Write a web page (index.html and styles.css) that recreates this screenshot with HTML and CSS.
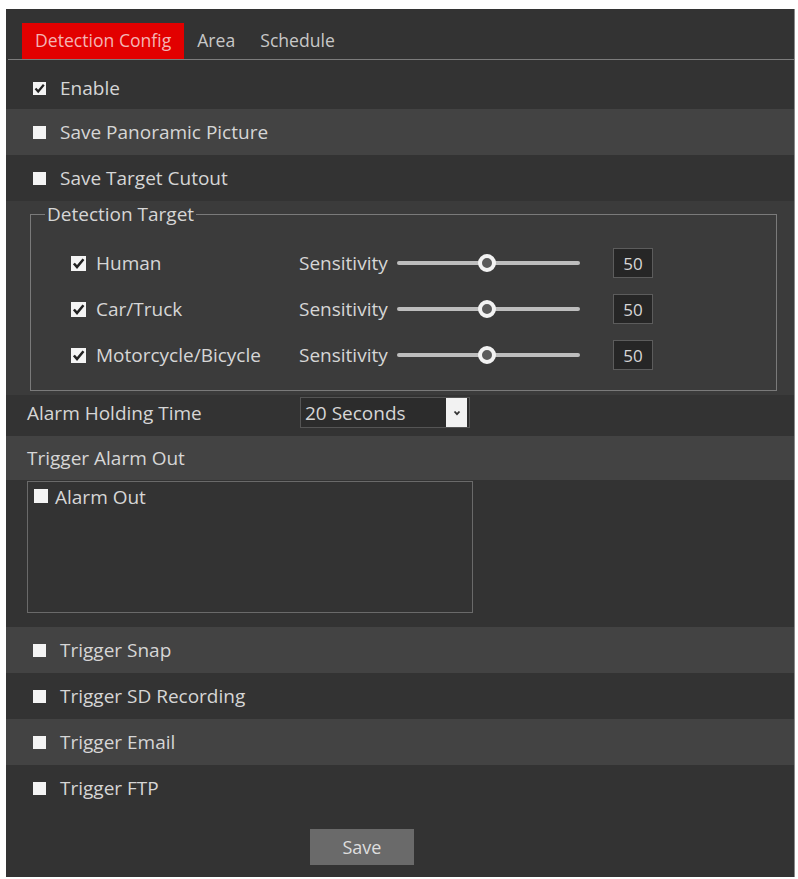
FILE: index.html
```html
<!DOCTYPE html>
<html lang="en">
<head>
    <meta charset="UTF-8">
    <meta name="viewport" content="width=device-width, initial-scale=1.0">
    <title>Detection Config</title>
    <link rel="stylesheet" href="styles.css">
</head>
<body>
    <div class="panel">
        <nav class="tabs">
            <span class="tab active">Detection Config</span>
            <span class="tab">Area</span>
            <span class="tab">Schedule</span>
        </nav>

        <div class="row first">
            <span class="cb checked"><svg viewBox="0 0 13 13"><path d="M2.5 6.5 L5.2 9.5 L10.8 2.8" fill="none" stroke="#222" stroke-width="2.2"/></svg></span>
            <span>Enable</span>
        </div>
        <div class="row light">
            <span class="cb"></span>
            <span>Save Panoramic Picture</span>
        </div>
        <div class="row">
            <span class="cb"></span>
            <span>Save Target Cutout</span>
        </div>

        <div class="target-section">
            <fieldset class="target">
                <legend>Detection Target</legend>
                <div class="target-row">
                    <span class="target-name"><span class="cb checked"><svg viewBox="0 0 13 13"><path d="M2.5 6.5 L5.2 9.5 L10.8 2.8" fill="none" stroke="#222" stroke-width="2.2"/></svg></span>Human</span>
                    <span class="sens-label">Sensitivity</span>
                    <div class="slider"><span class="thumb" style="left: 49%"></span></div>
                    <span class="value">50</span>
                </div>
                <div class="target-row">
                    <span class="target-name"><span class="cb checked"><svg viewBox="0 0 13 13"><path d="M2.5 6.5 L5.2 9.5 L10.8 2.8" fill="none" stroke="#222" stroke-width="2.2"/></svg></span>Car/Truck</span>
                    <span class="sens-label">Sensitivity</span>
                    <div class="slider"><span class="thumb" style="left: 49%"></span></div>
                    <span class="value">50</span>
                </div>
                <div class="target-row">
                    <span class="target-name"><span class="cb checked"><svg viewBox="0 0 13 13"><path d="M2.5 6.5 L5.2 9.5 L10.8 2.8" fill="none" stroke="#222" stroke-width="2.2"/></svg></span>Motorcycle/Bicycle</span>
                    <span class="sens-label">Sensitivity</span>
                    <div class="slider"><span class="thumb" style="left: 49%"></span></div>
                    <span class="value">50</span>
                </div>
            </fieldset>
        </div>

        <div class="row plain holding">
            <span class="holding-label">Alarm Holding Time</span>
            <div class="select">
                <span class="select-text">20 Seconds</span>
                <span class="select-btn"><svg viewBox="0 0 10 10"><path d="M2.5 3.5 L5 6.2 L7.5 3.5" fill="none" stroke="#333" stroke-width="1.8"/></svg></span>
            </div>
        </div>
        <div class="row plain light alarm-head">Trigger Alarm Out</div>
        <div class="alarm-section">
            <div class="alarm-box">
                <span class="cb small"></span>
                <span>Alarm Out</span>
            </div>
        </div>

        <div class="row light">
            <span class="cb"></span>
            <span>Trigger Snap</span>
        </div>
        <div class="row">
            <span class="cb"></span>
            <span>Trigger SD Recording</span>
        </div>
        <div class="row light">
            <span class="cb"></span>
            <span>Trigger Email</span>
        </div>
        <div class="row">
            <span class="cb"></span>
            <span>Trigger FTP</span>
        </div>

        <div class="actions">
            <button class="save">Save</button>
        </div>
    </div>
</body>
</html>
```

FILE: styles.css
```css
body {
    margin: 9px 3px 2px 6px;
    background-color: #ffffff;
    font-family: 'Open Sans', 'Liberation Sans', sans-serif;
    font-size: 19px;
    color: #d6d6d6;
}

.panel {
    width: 789px;
    height: 868px;
    background-color: #333333;
    border-right: 1px solid #8a8a8a;
    box-sizing: border-box;
    display: flex;
    flex-direction: column;
}

.tabs {
    display: flex;
    align-items: stretch;
    gap: 13px;
    height: 36px;
    margin: 14px 0 0 2px;
    padding-left: 14px;
    border-bottom: 1px solid #7c7c7c;
}

.tab {
    display: flex;
    align-items: center;
    font-size: 17.6px;
    color: #c8c8c8;
    padding: 0 0 2px 0;
}

.tab.active {
    background-color: #e20000;
    color: #f4b4b4;
    padding: 0 13px 2px 13px;
}

.tab + .tab + .tab {
    margin-left: 12px;
}

.row {
    display: flex;
    align-items: center;
    gap: 14px;
    height: 46px;
    padding-left: 27px;
    box-sizing: border-box;
}

.row.first {
    height: 49px;
    padding-top: 7px;
}

.row.light {
    background-color: #434343;
}

.row.plain {
    padding-left: 21px;
}

.cb {
    width: 13px;
    height: 13px;
    background-color: #f4f4f4;
    display: inline-block;
    flex-shrink: 0;
}

.cb svg {
    display: block;
    width: 100%;
    height: 100%;
}

.target-section {
    background-color: #3b3b3b;
    padding: 0 17px 4px 24px;
}

.target {
    margin: 0;
    border: 1px solid #7a7a7a;
    padding: 13px 0 0 0;
    height: 190px;
    box-sizing: border-box;
}

.target legend {
    padding: 0 2px;
    margin-left: 14px;
    color: #d6d6d6;
}

.target-row {
    display: flex;
    align-items: center;
    height: 46px;
    padding-left: 40px;
}

.target-name {
    display: flex;
    align-items: center;
    gap: 10px;
    width: 228px;
}

.target-name .cb {
    width: 15px;
    height: 15px;
}

.sens-label {
    width: 98px;
}

.slider {
    position: relative;
    width: 183px;
    height: 4px;
    background-color: #bdbdbd;
    border-radius: 2px;
}

.thumb {
    position: absolute;
    top: 50%;
    width: 10px;
    height: 10px;
    border: 4px solid #f2f2f2;
    border-radius: 50%;
    background-color: #5a5a5a;
    transform: translate(-50%, -50%);
}

.value {
    margin-left: 33px;
    width: 40px;
    height: 30px;
    box-sizing: border-box;
    border: 1px solid #5c5c5c;
    background-color: #262626;
    display: flex;
    align-items: center;
    justify-content: center;
    font-size: 17px;
}

.holding {
    height: 41px;
    gap: 0;
    padding-bottom: 6px;
}

.holding-label {
    width: 273px;
}

.select {
    display: flex;
    align-items: center;
    justify-content: space-between;
    width: 170px;
    height: 31px;
    box-sizing: border-box;
    border: 1px solid #555555;
    background-color: #2c2c2c;
    padding: 0 2px 0 4px;
}

.select-btn {
    width: 21px;
    height: 29px;
    background-color: #f2f2f2;
    display: flex;
    align-items: center;
    justify-content: center;
}

.select-btn svg {
    width: 10px;
    height: 10px;
}

.alarm-head {
    height: 44px;
}

.alarm-section {
    padding: 1px 0 14px 21px;
}

.alarm-box {
    width: 446px;
    height: 132px;
    box-sizing: border-box;
    border: 1px solid #6a6a6a;
    display: flex;
    align-items: flex-start;
    gap: 7px;
    padding: 2px 0 0 6px;
    line-height: 26px;
}

.cb.small {
    width: 14px;
    height: 14px;
    margin-top: 5px;
}

.actions {
    padding: 18px 0 0 304px;
}

.save {
    width: 104px;
    height: 36px;
    border: none;
    background-color: #6a6a6a;
    color: #dedede;
    font-family: 'Open Sans', 'Liberation Sans', sans-serif;
    font-size: 18px;
    padding: 0;
}
```
